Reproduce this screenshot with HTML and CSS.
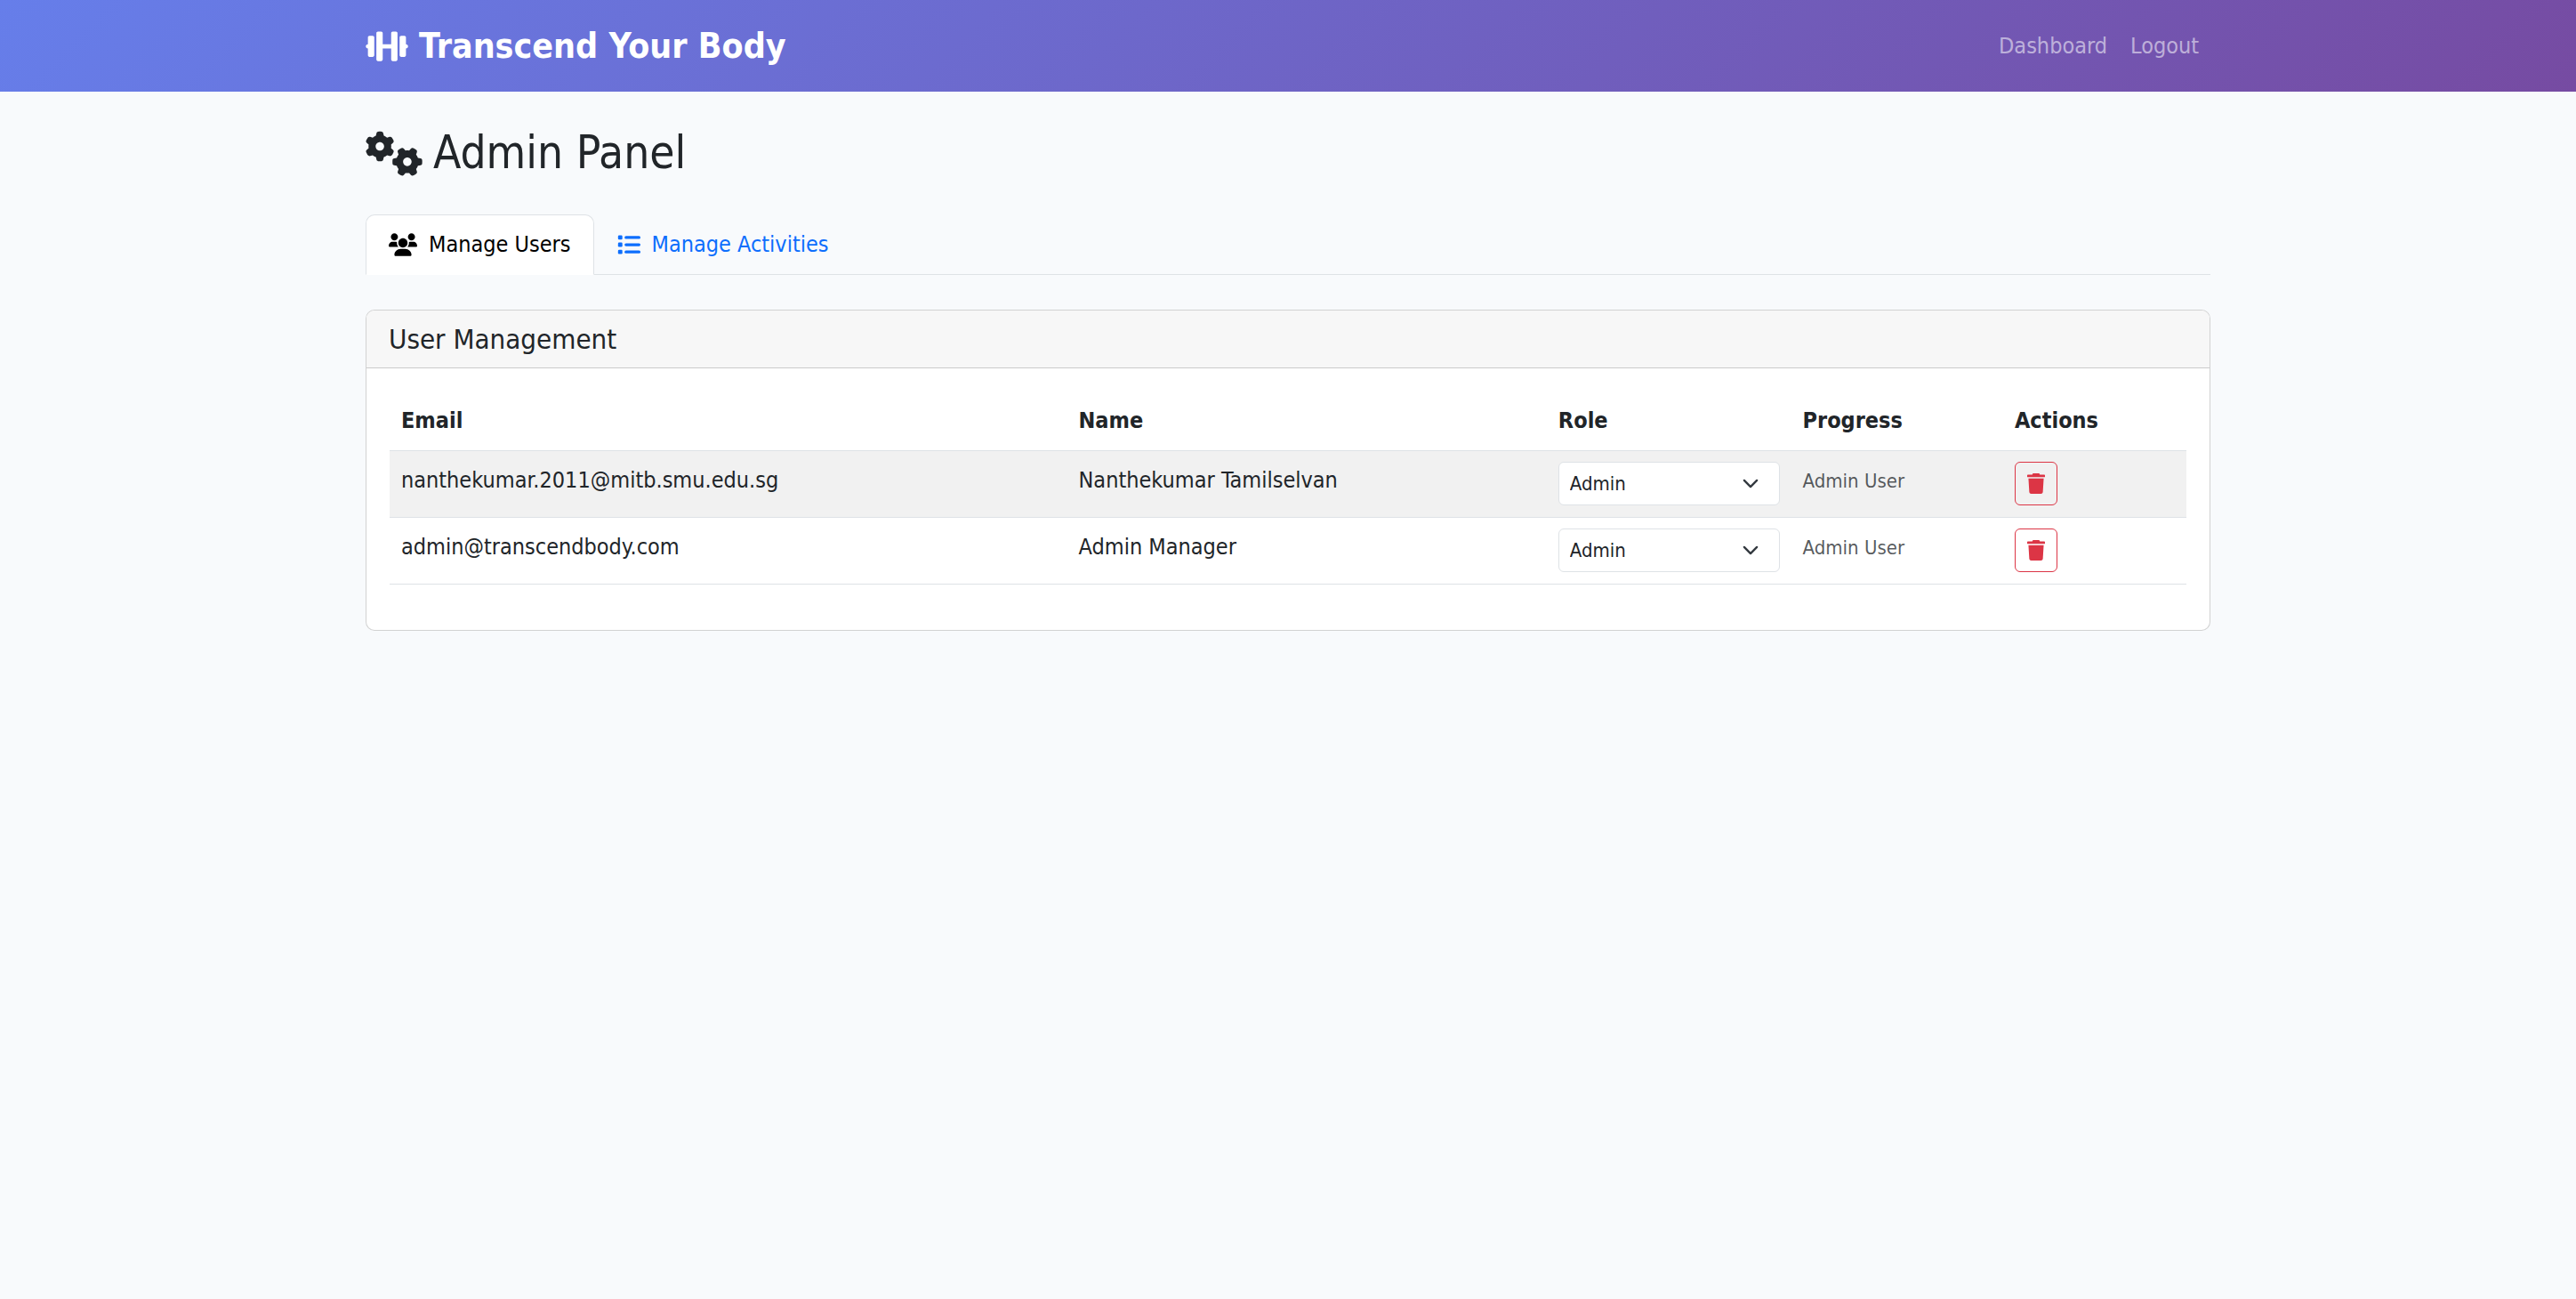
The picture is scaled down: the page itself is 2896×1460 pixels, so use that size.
FILE: index.html
```html
<!DOCTYPE html>
<html lang="en">
<head>
<meta charset="utf-8">
<meta name="viewport" content="width=device-width, initial-scale=1">
<title>Admin Panel - Transcend Your Body</title>
<link rel="stylesheet" href="styles.css">
</head>
<body>
<svg class="sprite" aria-hidden="true">
  <symbol id="dumbbell" viewBox="0 0 640 512"><path d="M104 96h-48C42.75 96 32 106.8 32 120V224C14.33 224 0 238.3 0 256s14.33 32 32 32V392C32 405.3 42.75 416 56 416h48C117.3 416 128 405.3 128 392v-272C128 106.8 117.3 96 104 96zM456 32h-48C394.8 32 384 42.75 384 56V224H256V56C256 42.75 245.3 32 232 32h-48C170.8 32 160 42.75 160 56v400C160 469.3 170.8 480 184 480h48C245.3 480 256 469.3 256 456V288h128v168c0 13.25 10.75 24 24 24h48c13.25 0 24-10.75 24-24V56C480 42.75 469.3 32 456 32zM608 224V120C608 106.8 597.3 96 584 96h-48C522.8 96 512 106.8 512 120v272c0 13.25 10.75 24 24 24h48c13.25 0 24-10.75 24-24V288c17.67 0 32-14.33 32-32S625.7 224 608 224z"/></symbol>
  <symbol id="gears" viewBox="0 0 640 512">
    <path id="gear" d="M286.3 155.1C287.4 161.9 288 168.9 288 176C288 183.1 287.4 190.1 286.3 196.9L308.5 216.7C315.5 223 318.4 232.1 314.7 241.7C312.4 247 309.9 252.2 307.1 257.2L304 262.6C301 267.6 297.7 272.4 294.2 277.1C288.5 284.7 278.5 287.2 269.5 284.2L241.2 274.9C230.5 283.8 218.3 290.9 205 295.9L198.1 324.9C197 334.2 189.8 341.6 180.4 342.8C173.7 343.6 166.9 344 160 344C153.1 344 146.3 343.6 139.6 342.8C130.2 341.6 123 334.2 121.9 324.9L115 295.9C101.7 290.9 89.5 283.8 78.75 274.9L50.53 284.2C41.54 287.2 31.52 284.7 25.82 277.1C22.28 272.4 18.98 267.5 15.94 262.5L12.92 257.2C10.13 252.2 7.59 247 5.32 241.7C1.62 232.1 4.46 223 11.52 216.7L33.7 196.9C32.58 190.1 32 183.1 32 176C32 168.9 32.58 161.9 33.7 155.1L11.52 135.3C4.46 129 1.62 119 5.32 110.3C7.59 105 10.13 99.79 12.91 94.76L15.95 89.51C18.98 84.46 22.28 79.58 25.82 74.89C31.52 67.34 41.54 64.83 50.53 67.79L78.75 77.09C89.5 68.25 101.7 61.13 115 56.15L121.9 27.08C123 17.8 130.2 10.37 139.6 9.23C146.3 8.42 153.1 8 160 8C166.9 8 173.7 8.42 180.4 9.23C189.8 10.37 197 17.8 198.1 27.08L205 56.15C218.3 61.13 230.5 68.25 241.2 77.09L269.5 67.79C278.5 64.83 288.5 67.34 294.2 74.89C297.7 79.56 301 84.42 304 89.44L307.1 94.83C309.9 99.84 312.4 105 314.7 110.3C318.4 119 315.5 129 308.5 135.3L286.3 155.1zM160 128C133.5 128 112 149.5 112 176C112 202.5 133.5 224 160 224C186.5 224 208 202.5 208 176C208 149.5 186.5 128 160 128z"/>
    <use href="#gear" transform="translate(470 350) rotate(90) translate(-160 -176)"/>
  </symbol>
  <symbol id="users" viewBox="0 0 640 512"><path d="M320 320c57.41 0 104-46.56 104-104c0-57.44-46.54-104-104-104c-57.41 0-104 46.56-104 104C216 273.4 262.5 320 320 320zM369.9 352H270.1C191.6 352 128 411.7 128 485.3C128 500.1 140.7 512 156.4 512h327.2C499.3 512 512 500.1 512 485.3C512 411.7 448.4 352 369.9 352zM512 160c44.18 0 80-35.82 80-80S556.2 0 512 0c-44.18 0-80 35.82-80 80S467.8 160 512 160zM183.9 216c0-5.45 .98-10.63 1.61-15.91C174.6 195 162.6 192 149.9 192H88.08C39.44 192 0 233.8 0 285.3C0 295.6 7.89 304 17.62 304h199.5C196.7 280.2 183.9 249.7 183.9 216zM128 160c44.18 0 80-35.82 80-80S172.2 0 128 0C83.82 0 48 35.82 48 80S83.82 160 128 160zM551.9 192h-61.84c-12.8 0-24.88 3.04-35.86 8.24C454.8 205.5 455.8 210.6 455.8 216c0 33.71-12.78 64.21-33.16 88h199.7C632.1 304 640 295.6 640 285.3C640 233.8 600.6 192 551.9 192z"/></symbol>
  <symbol id="list" viewBox="0 0 512 512"><rect x="16" y="48" width="96" height="96" rx="24"/><rect x="16" y="208" width="96" height="96" rx="24"/><rect x="16" y="368" width="96" height="96" rx="24"/><rect x="160" y="64" width="352" height="64" rx="32"/><rect x="160" y="224" width="352" height="64" rx="32"/><rect x="160" y="384" width="352" height="64" rx="32"/></symbol>
  <symbol id="trash" viewBox="0 0 448 512"><path d="M53.21 467c1.56 24.84 23.02 45 47.9 45h245.8c24.88 0 46.33-20.16 47.9-45L416 128H32L53.21 467zM432 32H320l-11.58-23.16c-2.71-5.42-8.25-8.84-14.31-8.84H153.9c-6.06 0-11.6 3.42-14.31 8.84L128 32H16c-8.84 0-16 7.16-16 16V80c0 8.84 7.16 16 16 16h416c8.84 0 16-7.16 16-16V48C448 39.16 440.8 32 432 32z"/></symbol>
</svg>

<header class="navbar">
  <div class="container navbar-inner">
    <a class="brand" href="#"><svg class="icon icon-brand" aria-hidden="true"><use href="#dumbbell"/></svg>Transcend Your Body</a>
    <nav class="navbar-links">
      <a href="#">Dashboard</a>
      <a href="#">Logout</a>
    </nav>
  </div>
</header>

<main class="container content">
  <h1 class="page-title"><svg class="icon icon-title" aria-hidden="true"><use href="#gears"/></svg>Admin Panel</h1>

  <nav class="tabs">
    <a class="tab active" href="#users-panel" aria-current="page"><svg class="icon icon-users" aria-hidden="true"><use href="#users"/></svg>Manage Users</a>
    <a class="tab" href="#activities"><svg class="icon icon-list" aria-hidden="true"><use href="#list"/></svg>Manage Activities</a>
  </nav>

  <section class="card" id="users-panel">
    <h2 class="card-header">User Management</h2>
    <div class="card-body">
      <table class="table">
        <colgroup>
          <col class="col-email"><col class="col-name"><col class="col-role"><col class="col-progress"><col class="col-actions">
        </colgroup>
        <thead>
          <tr><th scope="col">Email</th><th scope="col">Name</th><th scope="col">Role</th><th scope="col">Progress</th><th scope="col">Actions</th></tr>
        </thead>
        <tbody>
          <tr>
            <td>nanthekumar.2011@mitb.smu.edu.sg</td>
            <td>Nanthekumar Tamilselvan</td>
            <td><select class="select" aria-label="Role of Nanthekumar Tamilselvan"><option>User</option><option selected>Admin</option></select></td>
            <td><span class="muted">Admin User</span></td>
            <td><button class="btn-delete" type="button" aria-label="Delete Nanthekumar Tamilselvan"><svg class="icon icon-trash" aria-hidden="true"><use href="#trash"/></svg></button></td>
          </tr>
          <tr>
            <td>admin@transcendbody.com</td>
            <td>Admin Manager</td>
            <td><select class="select" aria-label="Role of Admin Manager"><option>User</option><option selected>Admin</option></select></td>
            <td><span class="muted">Admin User</span></td>
            <td><button class="btn-delete" type="button" aria-label="Delete Admin Manager"><svg class="icon icon-trash" aria-hidden="true"><use href="#trash"/></svg></button></td>
          </tr>
        </tbody>
      </table>
    </div>
  </section>
</main>
</body>
</html>
```

FILE: styles.css
```css
*,
*::before,
*::after {
  box-sizing: border-box;
}

body {
  margin: 0;
  background: #f8fafc;
  color: #212529;
  font-family: Tahoma, "DejaVu Sans Condensed", "DejaVu Sans", sans-serif;
  font-size: 25px;
  line-height: 38px;
}

a {
  text-decoration: none;
}

.sprite {
  display: none;
}

.icon {
  flex: none;
  fill: currentColor;
}

.container {
  max-width: 2112px;
  margin: 0 auto;
  padding: 0 19px;
}

/* Navbar */
.navbar {
  padding: 13px 0;
  background: linear-gradient(135deg, #667eea 0%, #764ba2 100%);
}

.navbar-inner {
  display: flex;
  align-items: center;
  justify-content: space-between;
}

.brand {
  display: flex;
  align-items: center;
  gap: 12px;
  padding: 9px 0;
  color: #fff;
  font-size: 39px;
  font-weight: 700;
  line-height: 59px;
}

.icon-brand {
  width: 48px;
  height: 38px;
}

.navbar-links {
  display: flex;
}

.navbar-links a {
  padding: 13px;
  color: rgba(255, 255, 255, 0.55);
}

/* Page heading */
.content {
  padding-top: 38px;
}

.page-title {
  display: flex;
  align-items: center;
  gap: 12px;
  margin: 0 0 38px;
  font-size: 51px;
  font-weight: 400;
  line-height: 62px;
}

.icon-title {
  width: 64px;
  height: 51px;
}

/* Tabs */
.tabs {
  display: flex;
  margin-bottom: 39px;
  border-bottom: 1px solid #dee2e6;
}

.tab {
  display: flex;
  align-items: center;
  gap: 13px;
  margin-bottom: -1px;
  padding: 14px 25px;
  border: 1px solid transparent;
  border-radius: 10px 10px 0 0;
  color: #0d6efd;
}

.tab.active {
  border-color: #dee2e6 #dee2e6 #fff;
  background: #fff;
  color: #000;
}

.icon-users {
  width: 32px;
  height: 26px;
}

.icon-list {
  width: 26px;
  height: 26px;
}

/* Card */
.card {
  border: 1px solid rgba(0, 0, 0, 0.175);
  border-radius: 10px;
  background: #fff;
}

.card-header {
  margin: 0;
  padding: 13px 25px;
  border-bottom: 1px solid rgba(0, 0, 0, 0.175);
  border-radius: 9px 9px 0 0;
  background: #f7f7f7;
  font-size: 31px;
  font-weight: 400;
  line-height: 38px;
}

.card-body {
  padding: 26px 26px 51px;
}

/* Table */
.table {
  width: 100%;
  border-collapse: collapse;
  table-layout: fixed;
  line-height: 42px;
}

.table th,
.table td {
  padding: 12px 13px;
  border-bottom: 1px solid #dee2e6;
  text-align: left;
  vertical-align: top;
}

.table tbody tr:nth-child(odd) {
  background: #f1f1f1;
}

.col-email {
  width: 37.7%;
}

.col-name {
  width: 26.7%;
}

.col-role {
  width: 13.6%;
}

.col-progress {
  width: 11.8%;
}

.col-actions {
  width: 10.2%;
}

.muted {
  color: rgba(33, 37, 41, 0.75);
  font-size: 22px;
}

.select {
  display: block;
  width: 100%;
  height: 49px;
  padding: 0 58px 0 12px;
  border: 1px solid #dee2e6;
  border-radius: 6px;
  appearance: none;
  background: #fff url("data:image/svg+xml,%3Csvg xmlns='http://www.w3.org/2000/svg' viewBox='0 0 16 16'%3E%3Cpath fill='none' stroke='%23343a40' stroke-linecap='round' stroke-linejoin='round' stroke-width='2' d='m2 5 6 6 6-6'/%3E%3C/svg%3E") no-repeat right 19px center / 26px 19px;
  color: #212529;
  font-family: inherit;
  font-size: 22px;
}

.btn-delete {
  display: flex;
  align-items: center;
  justify-content: center;
  width: 48px;
  height: 49px;
  margin-bottom: 1px;
  padding: 0;
  border: 1px solid #dc3545;
  border-radius: 6px;
  background: transparent;
  color: #dc3545;
}

.icon-trash {
  width: 20px;
  height: 23px;
}
```
